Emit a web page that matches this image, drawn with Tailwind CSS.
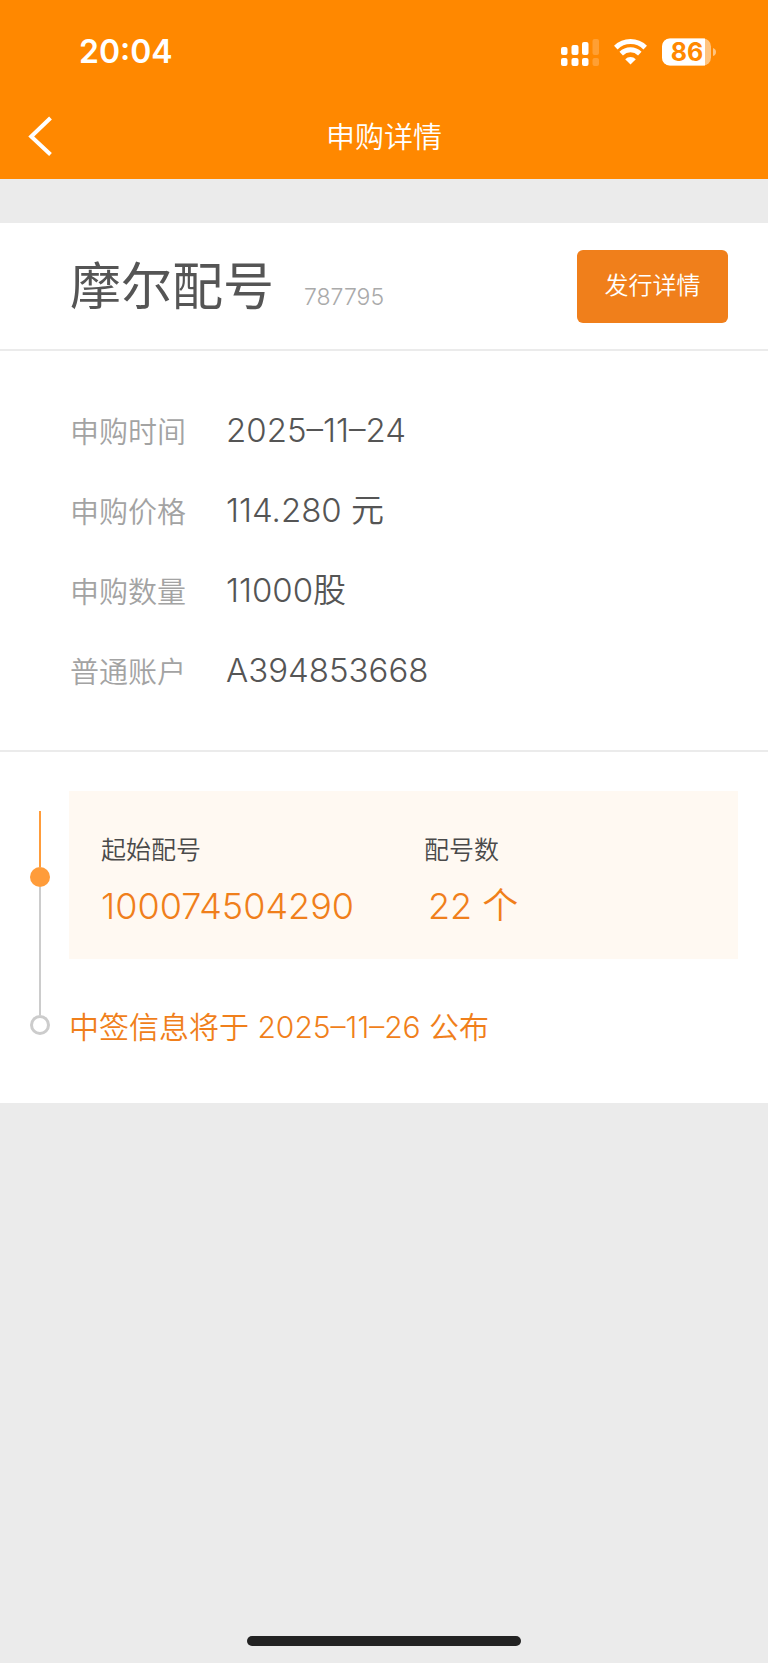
<!DOCTYPE html>
<html lang="zh-CN">
<head>
    <meta charset="UTF-8">
    <meta name="viewport" content="width=device-width, initial-scale=1.0">
    <title>申购详情</title>
    <script src="https://cdn.jsdelivr.net/npm/@tailwindcss/browser@4"></script>
</head>
<body class="min-h-screen flex flex-col bg-[#ebebeb] text-[#555] font-[350] font-['Inter','Noto_Sans_CJK_SC',sans-serif]">
    <header class="bg-[#ff8800] text-white">
        <!-- Status bar -->
        <div class="h-24 pt-[7px] pl-[79px] pr-13 flex items-center justify-between">
            <span class="text-[32px] font-semibold leading-10">20:04</span>
            <div class="flex items-center gap-[15px]">
                <svg class="w-[38px] h-7" viewBox="0 0 38 28" fill="currentColor" aria-hidden="true">
                    <rect x="0" y="9" width="6.5" height="8" rx="2"/>
                    <rect x="10.5" y="7" width="7" height="10" rx="2"/>
                    <rect x="21" y="4" width="6.5" height="13" rx="2"/>
                    <rect x="31.5" y="1" width="6.5" height="16" rx="2" opacity=".2"/>
                    <rect x="0" y="20" width="6.5" height="8" rx="2"/>
                    <rect x="10.5" y="20" width="7" height="8" rx="2"/>
                    <rect x="21" y="20" width="6.5" height="8" rx="2"/>
                    <rect x="31.5" y="20" width="6.5" height="8" rx="2" opacity=".2"/>
                </svg>
                <svg class="w-[33px] h-7" viewBox="0 0 33 28" aria-hidden="true">
                    <g fill="none" stroke="currentColor" stroke-width="5">
                        <path d="M1.8 9.6a21 21 0 0 1 29.4 0"/>
                        <path d="M7.2 15.6a13.3 13.3 0 0 1 18.6 0"/>
                    </g>
                    <path d="M11.2 21.2a7.6 7.6 0 0 1 10.6 0L16.5 26.500z" fill="currentColor"/>
                </svg>
                <svg class="w-[54px] h-7" viewBox="0 0 54 28" aria-hidden="true">
                    <rect x="0" y="0.5" width="49" height="27" rx="8" fill="#fff" opacity=".5"/>
                    <path d="M8 .5h35v27H8a8 8 0 0 1-8-8v-11a8 8 0 0 1 8-8z" fill="#fff"/>
                    <path d="M51 10q3 1 3 4t-3 4z" fill="#fff" opacity=".5"/>
                    <text x="25" y="23" text-anchor="middle" class="text-[25px] font-bold" fill="#ff8800">86</text>
                </svg>
            </div>
        </div>
        <!-- Nav bar -->
        <nav class="h-[83px] px-7 pb-1 grid grid-cols-[1fr_auto_1fr] items-center">
            <button type="button" aria-label="返回" class="justify-self-start">
                <svg class="w-6 h-10" viewBox="0 0 24 40" fill="none" stroke="currentColor" stroke-width="4">
                    <path d="M22.5 2 3.2 20.5 22.5 38.5"/>
                </svg>
            </button>
            <h1 class="pt-1 text-[29px] leading-10">申购详情</h1>
        </nav>
    </header>

    <main class="mt-11 bg-white">
        <section class="h-32 pl-[70px] pr-10 flex items-center justify-between border-b-2 border-[#ebebeb]">
            <div class="pt-px flex items-baseline gap-[30px]">
                <h2 class="text-[51px] leading-[64px] font-normal">摩尔配号</h2>
                <span class="text-[23px] text-[#aaa]">787795</span>
            </div>
            <button type="button" class="w-[151px] h-[73px] pb-px rounded-md bg-[#f07f1b] text-2xl text-white">发行详情</button>
        </section>

        <dl class="pt-10 pb-[39px] pl-[70px] grid grid-cols-[156px_1fr] auto-rows-[80px] items-center text-[33px] border-b-2 border-[#ebebeb]">
            <dt class="pt-1 text-[29px] text-[#a3a3a3]">申购时间</dt>
            <dd>2025–11–24</dd>
            <dt class="pt-1 text-[29px] text-[#a3a3a3]">申购价格</dt>
            <dd>114.280 元</dd>
            <dt class="pt-1 text-[29px] text-[#a3a3a3]">申购数量</dt>
            <dd>11000股</dd>
            <dt class="pt-1 text-[29px] text-[#a3a3a3]">普通账户</dt>
            <dd>A394853668</dd>
        </dl>

        <section class="pt-[39px] pb-14 px-[30px] flex gap-[19px]">
            <!-- Timeline -->
            <div class="w-5 pt-5 pb-3 flex flex-col items-center" aria-hidden="true">
                <div class="w-[2px] h-14 bg-[#ff9c3a]"></div>
                <div class="size-5 rounded-full bg-[#ff9c3a]"></div>
                <div class="w-[2px] flex-1 bg-[#ccc]"></div>
                <div class="size-5 rounded-full border-3 border-[#ccc]"></div>
            </div>
            <div class="flex-1 text-[#f07f1b]">
                <dl class="h-[168px] px-8 pt-9 grid grid-cols-[323px_1fr] bg-[#fff9f2]">
                    <div>
                        <dt class="text-[25px] leading-[46px] text-[#4a4a4a]">起始配号</dt>
                        <dd class="text-[36px] leading-[66px]">100074504290</dd>
                    </div>
                    <div>
                        <dt class="text-[25px] leading-[46px] text-[#4a4a4a]">配号数</dt>
                        <dd class="pl-1 text-[36px] leading-[66px]">22 个</dd>
                    </div>
                </dl>
                <p class="mt-12 text-[30px] leading-10">中签信息将于 2025–11–26 公布</p>
            </div>
        </section>
    </main>

    <!-- Home indicator -->
    <div class="mt-auto mb-[17px] mx-auto w-[274px] h-[10px] rounded-full bg-[#222]"></div>
</body>
</html>
